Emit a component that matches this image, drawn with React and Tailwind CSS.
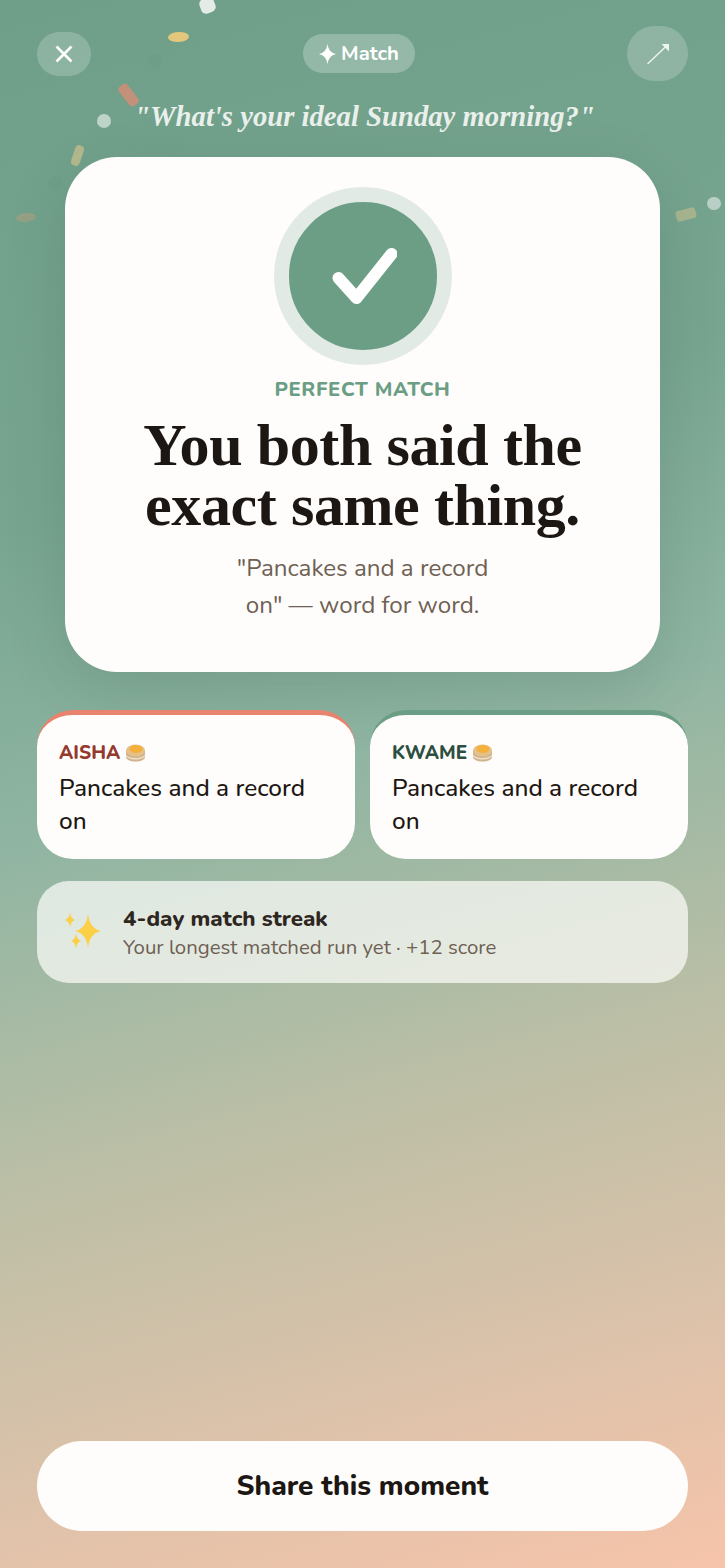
import React from "react"

const sans = "font-['Nunito','Lato','Noto_Sans',sans-serif]"

// Flat pancake stack, stands in for the emoji
function Pancake() {
  return (
    <svg width="21" height="18" viewBox="0 0 21 18" className="shrink-0">
      <path d="M1 7v6c0 2.500 4 4.500 9.500 4.500S20 15.500 20 13V7z" fill="#cfb48e" />
      <path d="M1 10.500c1 2.200 5 3.500 9.500 3.500s8.500-1.300 9.500-3.500V12c-1 2.200-5 3.500-9.500 3.500S2 14.200 1 12z" fill="#eee0c8" />
      <ellipse cx="10.500" cy="6.500" rx="9.500" ry="6" fill="#e4c08a" />
      <ellipse cx="11" cy="5" rx="6.500" ry="4" fill="#f5b03c" />
    </svg>
  )
}

function Sparkles() {
  const star = (x, y, rx, ry) =>
    `M${x} ${y - ry}Q${x + rx * 0.12} ${y - ry * 0.15} ${x + rx} ${y}Q${x + rx * 0.12} ${y + ry * 0.15} ${x} ${y + ry}Q${x - rx * 0.12} ${y + ry * 0.15} ${x - rx} ${y}Q${x - rx * 0.12} ${y - ry * 0.15} ${x} ${y - ry}Z`
  return (
    <svg width="40" height="40" viewBox="0 0 40 40" className="shrink-0">
      <path d={star(24, 19, 13, 17)} fill="#fbcf46" />
      <path d={star(6, 8, 5, 8)} fill="#fbcf46" />
      <path d={star(12, 29, 5, 8)} fill="#fbcf46" />
    </svg>
  )
}

function AnswerCard({ name, nameColor, borderColor }) {
  return (
    <div className={`flex-1 h-[149px] rounded-[36px] border-t-[5px] bg-[#fefdfb] px-[22px] pt-[25px] ${borderColor}`}>
      <div className={`flex items-center gap-[5px] text-[19px] leading-[26px] font-extrabold ${nameColor}`}>
        {name} <Pancake />
      </div>
      <p className="mt-[6px] text-[24.400px] leading-[33px] font-medium text-[#1c1713]">Pancakes and a record on</p>
    </div>
  )
}

// Confetti pieces lying over the background
const confetti = [
  "left-[200px] top-[-2px] w-[15px] h-[15px] rounded-[5px] rotate-[-20deg] bg-[#e5ebe7]",
  "left-[168px] top-[32px] w-[21px] h-[10px] rounded-[50%] rotate-[-3deg] bg-[#e3c77b]",
  "left-[122.500px] top-[83px] w-[11px] h-[24px] rounded-[4px] rotate-[-38deg] bg-[#c39079]",
  "left-[97px] top-[114px] w-[14px] h-[14px] rounded-full bg-[#bfd4c9]",
  "left-[73px] top-[145px] w-[9px] h-[21px] rounded-[4px] rotate-[18deg] bg-[#b3b98e]",
  "left-[16px] top-[213px] w-[20px] h-[9px] rounded-[50%] rotate-[-5deg] bg-[#96a085]",
  "left-[676px] top-[209px] w-[20px] h-[11px] rounded-[3px] rotate-[-15deg] bg-[#a8b58f]",
  "left-[707px] top-[197px] w-[14px] h-[13px] rounded-full bg-[#b7cfc4]",
  "left-[148px] top-[54px] w-[14px] h-[14px] rounded-full bg-[#6f9e88]",
  "left-[48px] top-[176px] w-[14px] h-[14px] rounded-full bg-[#709f89]",
]

export default function App() {
  return (
    <div className={`relative flex h-[1568px] w-[725px] flex-col overflow-hidden bg-[linear-gradient(165deg,#6f9f89_0%,#77a590_30%,#8fb5a2_48%,#bcbfa6_68%,#dcc2aa_85%,#f6c4aa_100%)] px-[37px] ${sans}`}>
      {confetti.map((c) => (
        <div key={c} className={`absolute ${c}`} />
      ))}

      {/* Top bar */}
      <div className="relative mt-[26px] flex h-[55px] items-center justify-between">
        <button className="flex h-[44px] w-[54px] items-center justify-center rounded-full bg-white/20">
          <svg width="20" height="20" viewBox="0 0 20 20" fill="none" stroke="white" strokeWidth="2.600">
            <path d="M2.500 2.500l15 15M17.500 2.500l-15 15" />
          </svg>
        </button>
        <div className="flex h-[39px] w-[112px] items-center justify-center gap-[5px] rounded-full bg-white/25 text-[20.300px] font-bold text-white">
          <svg width="17" height="20" viewBox="0 0 17 20" fill="white">
            <path d="M8.500 0Q9.500 8.500 17 10Q9.500 11.500 8.500 20Q7.500 11.500 0 10Q7.500 8.500 8.500 0Z" />
          </svg>
          Match
        </div>
        <button className="flex h-[55px] w-[61px] items-center justify-center rounded-full bg-white/20">
          <svg width="24" height="22" viewBox="0 0 24 22" fill="none" stroke="#eef4f0" strokeWidth="1.400">
            <path d="M1.500 21L22 1.500" />
            <path d="M15.500 1h7.500v7.500z" fill="#eef4f0" stroke="none" />
          </svg>
        </button>
      </div>

      <p className="relative mt-[17px] pl-[4px] text-center font-['Liberation_Serif',serif] text-[28.700px] leading-[36px] font-bold italic text-[#eaf0eb]">
        "What's your ideal Sunday morning?"
      </p>

      {/* Result card */}
      <div className="relative mx-[28px] mt-[23px] flex h-[515px] flex-col items-center rounded-[52px] bg-[#fefdfb] pt-[30px] shadow-[0_20px_60px_rgba(40,70,55,0.16)]">
        <div className="flex h-[178px] w-[178px] items-center justify-center rounded-full border-[15px] border-[#e2eae5] bg-[#6b9e85]">
          <svg width="68" height="56" viewBox="0 0 68 56" fill="none" stroke="white" strokeWidth="12" strokeLinecap="round" strokeLinejoin="round">
            <path d="M9.500 30l18 20L62.500 6" />
          </svg>
        </div>
        <div className="mt-[11px] text-[20.200px] leading-[27px] font-extrabold tracking-[0.6px] text-[#6b9e85]">PERFECT MATCH</div>
        <h1 className="mt-[12px] text-center font-['Liberation_Serif',serif] text-[60px] leading-[60px] font-bold tracking-[-0.400px] text-[#1c1713]">
          You both said the
          <br />
          exact same thing.
        </h1>
        <p className="mt-[15px] text-center text-[24.200px] leading-[37px] text-[#6e6053]">
          "Pancakes and a record
          <br />
          on" — word for word.
        </p>
      </div>

      {/* Both answers */}
      <div className="relative mt-[38px] flex gap-[15px]">
        <AnswerCard name="AISHA" nameColor="text-[#94392e]" borderColor="border-[#e8836d]" />
        <AnswerCard name="KWAME" nameColor="text-[#2c4f42]" borderColor="border-[#6b9e85]" />
      </div>

      {/* Streak */}
      <div className="relative mt-[22px] flex h-[102px] items-center gap-[19px] rounded-[32px] bg-[#fefdfb]/70 pl-[27px]">
        <Sparkles />
        <div className="pt-[2px]">
          <div className="text-[22.300px] leading-[28px] font-extrabold text-[#2e2620]">4-day match streak</div>
          <div className="text-[20.400px] leading-[28px] text-[#6e6053]">Your longest matched run yet · +12 score</div>
        </div>
      </div>

      <button className="relative mt-auto mb-[37px] h-[90px] rounded-full bg-[#fefdfb] text-[28px] font-extrabold text-[#1c1713]">
        Share this moment
      </button>
    </div>
  )
}
